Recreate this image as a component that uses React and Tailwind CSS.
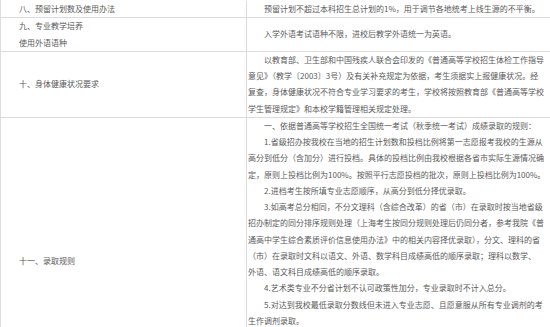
const rows = [
  {
    key: 'eight',
    label: ['八、预留计划数及使用办法'],
    body: (
      <p className="indent-[16px]">
        预留计划不超过本科招生总计划的1%，用于调节各地统考上线生源的不平衡。
      </p>
    ),
  },
  {
    key: 'nine',
    label: ['九、专业教学培养', '使用外语语种'],
    body: <p className="indent-[16px]">入学外语考试语种不限，进校后教学外语统一为英语。</p>,
  },
  {
    key: 'ten',
    label: ['十、身体健康状况要求'],
    body: (
      <p className="indent-[16px]">
        以教育部、卫生部和中国残疾人联合会印发的《普通高等学校招生体检工作指导
        <br />
        意见》（教学〔2003〕3号）及有关补充规定为依据，考生须据实上报健康状况。经
        <br />
        复查，身体健康状况不符合专业学习要求的考生，学校将按照教育部《普通高等学校
        <br />
        学生管理规定》和本校学籍管理相关规定处理。
      </p>
    ),
  },
  {
    key: 'eleven',
    label: ['十一、录取规则'],
    tall: true,
    body: (
      <>
        <p className="indent-[16px]">
          一、依据普通高等学校招生全国统一考试（秋季统一考试）成绩录取的规则：
        </p>
        <p className="indent-[16px]">
          1.省级招办按我校在当地的招生计划数和投档比例将第一志愿报考我校的生源从
          <br />
          高分到低分（含加分）进行投档。具体的投档比例由我校根据各省市实际生源情况确
          <br />
          定，原则上投档比例为100%。按照平行志愿投档的批次，原则上投档比例为100%。
        </p>
        <p className="indent-[16px]">2.进档考生按所填专业志愿顺序，从高分到低分择优录取。</p>
        <p className="indent-[16px]">
          3.如高考总分相同，不分文理科（含综合改革）的省（市）在录取时按当地省级
          <br />
          招办制定的同分排序规则处理（上海考生按同分规则处理后仍同分者，参考我院《普
          <br />
          通高中学生综合素质评价信息使用办法》中的相关内容择优录取），分文、理科的省
          <br />
          （市）在录取时文科以语文、外语、数学科目成绩高低的顺序录取；理科以数学、
          <br />
          外语、语文科目成绩高低的顺序录取。
        </p>
        <p className="indent-[16px]">
          4.艺术类专业不分省计划不认可政策性加分，专业录取时不计入总分。
        </p>
        <p className="indent-[16px]">
          5.对达到我校最低录取分数线但未进入专业志愿、且愿意服从所有专业调剂的考
          <br />
          生作调剂录取。
        </p>
      </>
    ),
  },
];

export default function App() {
  return (
    <div className="h-[327px] w-[550px] overflow-hidden bg-white">
      <div className="w-[550px] border-l border-[#dcdcdc] pt-px font-['Noto_Sans_CJK_SC',sans-serif] text-[8px] leading-[16.25px] text-[#5a5a5a]">
        {rows.map((row) => (
          <div
            key={row.key}
            className={`flex border-b border-[#dcdcdc] ${row.tall ? 'min-h-[288px]' : ''}`}
          >
            {/* Left: item name */}
            <div className="flex w-[246px] shrink-0 flex-col justify-center border-r border-[#dcdcdc] pl-[18px]">
              {row.label.map((line) => (
                <span key={line}>{line}</span>
              ))}
            </div>

            {/* Right: description */}
            <div
              className={`flex min-w-0 flex-1 flex-col whitespace-nowrap pl-px ${
                row.tall ? 'justify-start' : 'justify-center'
              }`}
            >
              {row.body}
            </div>
          </div>
        ))}
      </div>
    </div>
  );
}
